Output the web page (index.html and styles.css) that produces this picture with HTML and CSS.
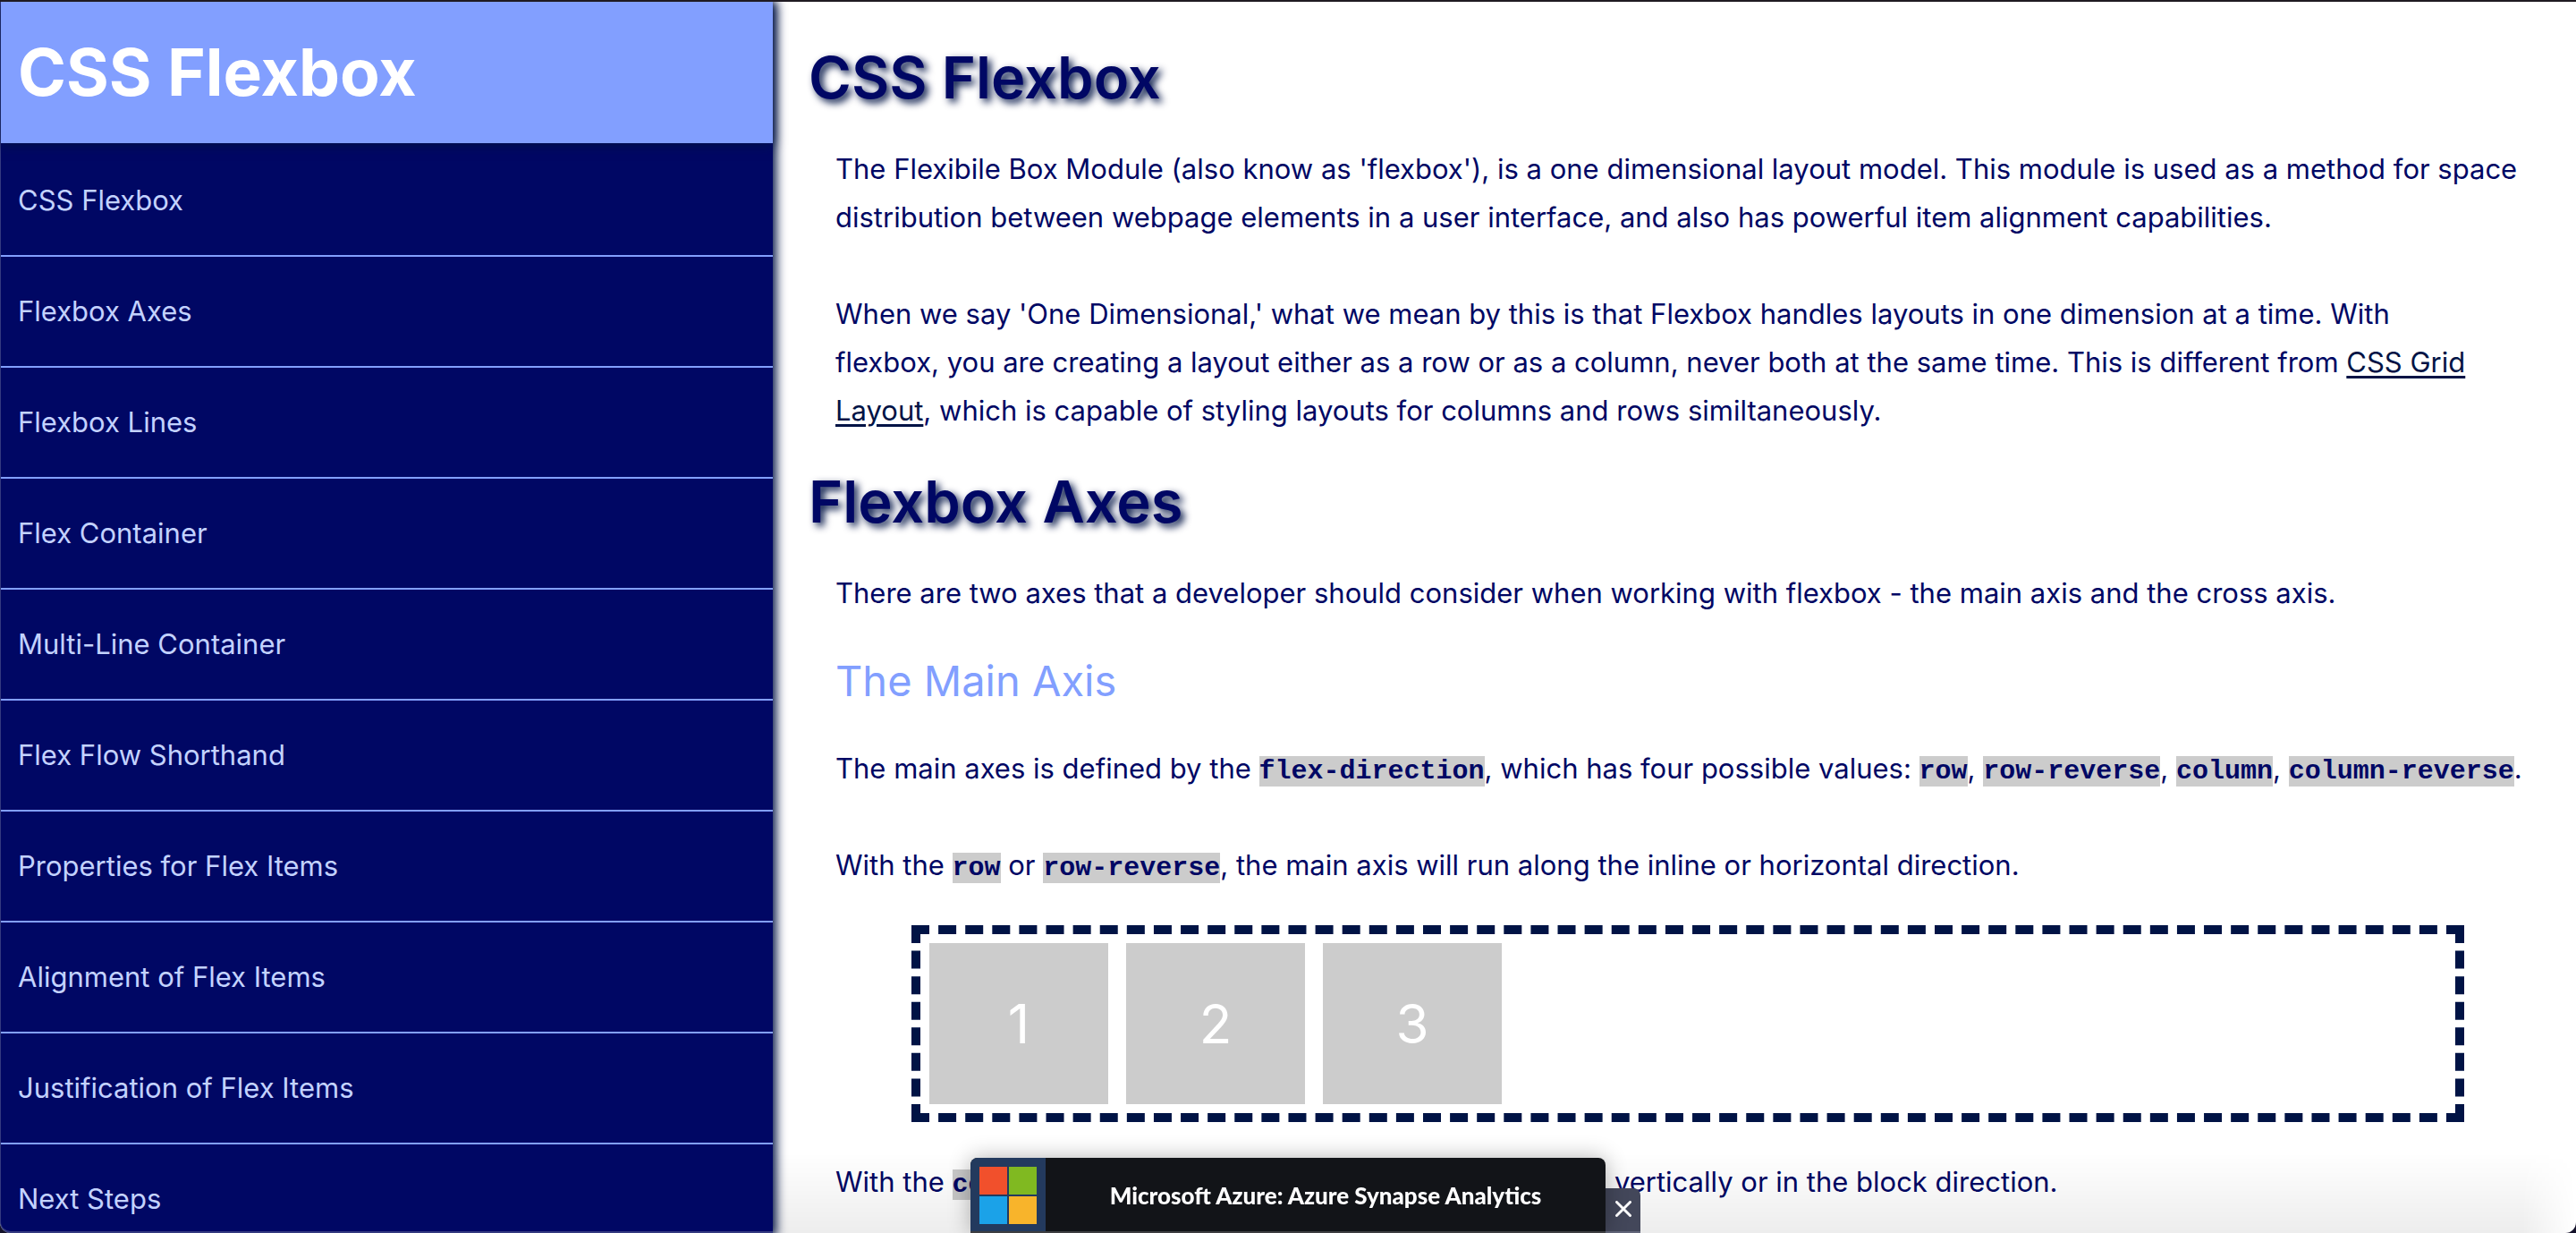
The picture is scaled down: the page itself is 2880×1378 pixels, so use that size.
FILE: index.html
```html
<!DOCTYPE html>
<html lang="en">
<head>
<meta charset="utf-8">
<title>CSS Flexbox</title>
<link rel="stylesheet" href="styles.css">
</head>
<body>
<div class="page">
  <nav class="sidebar">
    <header class="sidebar-title">CSS Flexbox</header>
    <ul class="nav-list">
      <li><a href="#css-flexbox">CSS Flexbox</a></li>
      <li><a href="#flexbox-axes">Flexbox Axes</a></li>
      <li><a href="#flexbox-lines">Flexbox Lines</a></li>
      <li><a href="#flex-container">Flex Container</a></li>
      <li><a href="#multi-line">Multi-Line Container</a></li>
      <li><a href="#flex-flow">Flex Flow Shorthand</a></li>
      <li><a href="#properties">Properties for Flex Items</a></li>
      <li><a href="#alignment">Alignment of Flex Items</a></li>
      <li><a href="#justification">Justification of Flex Items</a></li>
      <li><a href="#next-steps">Next Steps</a></li>
    </ul>
  </nav>
  <main class="content">
    <section id="css-flexbox">
      <h1>CSS Flexbox</h1>
      <p>The Flexibile Box Module (also know as 'flexbox'), is a one dimensional layout model. This module is used as a method for space distribution between webpage elements in a user interface, and also has powerful item alignment capabilities.</p>
      <p>When we say 'One Dimensional,' what we mean by this is that Flexbox handles layouts in one dimension at a time. With<br>flexbox, you are creating a layout either as a row or as a column, never both at the same time. This is different from <a href="#grid">CSS Grid<br>Layout</a>, which is capable of styling layouts for columns and rows similtaneously.</p>
    </section>
    <section id="flexbox-axes">
      <h1>Flexbox Axes</h1>
      <p>There are two axes that a developer should consider when working with flexbox - the main axis and the cross axis.</p>
      <h2>The Main Axis</h2>
      <p>The main axes is defined by the <code>flex-direction</code>, which has four possible values: <code>row</code>, <code>row-reverse</code>, <code>column</code>, <code>column-reverse</code>.</p>
      <p>With the <code>row</code> or <code>row-reverse</code>, the main axis will run along the inline or horizontal direction.</p>
      <div class="demo">
        <div class="demo-item">1</div>
        <div class="demo-item">2</div>
        <div class="demo-item">3</div>
      </div>
      <p>With the <code>column</code> or <code>column-reverse</code>, the main axis will run vertically or in the block direction.</p>
    </section>
  </main>
</div>
<div class="bottom-fade"></div>
<aside class="toast">
  <div class="toast-body">
    <div class="toast-icon">
      <svg viewBox="0 0 64 64" aria-hidden="true">
        <rect x="0" y="0" width="31" height="31" fill="#f1502c"/>
        <rect x="33" y="0" width="31" height="31" fill="#80b921"/>
        <rect x="0" y="33" width="31" height="31" fill="#1ba2e8"/>
        <rect x="33" y="33" width="31" height="31" fill="#f8b42b"/>
      </svg>
    </div>
    <div class="toast-text">Microsoft Azure: Azure Synapse Analytics</div>
  </div>
  <button class="toast-close" type="button" aria-label="Close">
    <svg viewBox="0 0 18 18" aria-hidden="true"><path d="M1.5 1.5 16.5 16.5M16.5 1.5 1.5 16.5" stroke="#fff" stroke-width="3" stroke-linecap="round"/></svg>
  </button>
</aside>
</body>
</html>
```
FILE: styles.css
```css
* { box-sizing: border-box; }

html {
  height: 100%;
  overflow: hidden;
  background: #14122a;
}

body {
  margin: 0;
  height: 100%;
  overflow: hidden;
  border-top: 2px solid #1f1a22;
  border-radius: 0 0 12px 12px;
  background: #fff;
  color: #000764;
  font: 31px/54px Inter, "Open Sans", sans-serif;
}

.page {
  display: grid;
  grid-template-columns: 30% 1fr;
  grid-template-rows: minmax(0, 1fr);
  height: 100%;
}

.sidebar {
  position: relative;
  background: #000764;
  border-bottom: 2px solid #343a80;
  border-left: 1px solid #343a80;
  border-radius: 0 0 0 12px;
  box-shadow: 2px 2px 12px 2px #001345;
}

.sidebar-title {
  height: 158px;
  padding-left: 19px;
  background: #829fff;
  box-shadow: 0 2px 12px #001345;
  color: #fff;
  font-size: 73px;
  font-weight: 700;
  line-height: 158px;
}

.nav-list {
  margin: 0;
  padding: 3px 0 0;
  list-style: none;
}

.nav-list a {
  display: block;
  height: 124px;
  padding-left: 19px;
  border-bottom: 2px solid #829fff;
  color: #c3d2ff;
  line-height: 122px;
  text-decoration: none;
}

.nav-list li:last-child a {
  border-bottom: 0;
}

.content {
  overflow: hidden;
  padding: 40px 40px 0;
}

section + section {
  margin-top: 30px;
}

h1 {
  margin: 0 0 30px;
  font-size: 65px;
  font-weight: 600;
  line-height: 90px;
  text-shadow: 4px 4px 8px #001345;
}

h2 {
  margin: 44px 0 44px 30px;
  color: #829fff;
  font-size: 47px;
  font-weight: 400;
  line-height: 54px;
}

p {
  margin: 0 0 0 30px;
}

p + p {
  margin-top: 54px;
}

p a {
  color: #001345;
  text-underline-offset: 4px;
}

code {
  background: #ccc;
  font: 700 30px/1 "Liberation Mono", monospace;
}

.demo {
  display: flex;
  gap: 20px;
  margin: 40px 85px 40px 115px;
  padding: 10px;
  border: 10px dashed #001345;
}

.demo-item {
  width: 200px;
  height: 180px;
  background: #ccc;
  color: #fff;
  font-size: 60px;
  line-height: 180px;
  text-align: center;
}

.bottom-fade {
  position: fixed;
  right: 0;
  bottom: 0;
  left: 30%;
  height: 90px;
  border-radius: 0 0 12px 0;
  background: linear-gradient(rgba(0, 0, 0, 0), rgba(0, 0, 0, 0.07));
  mask-image: linear-gradient(to left, transparent, #000 60px);
}

.toast {
  position: fixed;
  bottom: 0;
  left: 50%;
  display: flex;
  align-items: flex-end;
  margin-left: -355px;
}

.toast-body {
  z-index: 1;
  display: flex;
  width: 710px;
  height: 84px;
  overflow: hidden;
  border-bottom: 2px solid #3d3e41;
  border-radius: 8px 8px 0 0;
  background: #121418;
  box-shadow: 0 0 24px rgba(0, 0, 0, 0.3);
}

.toast-icon {
  width: 84px;
  padding: 10px;
  background: #233a5e;
}

.toast-icon svg {
  display: block;
  width: 64px;
  height: 64px;
}

.toast-text {
  flex: 1;
  color: #fff;
  font: 900 26px/84px Lato, sans-serif;
  text-align: center;
}

.toast-close {
  width: 39px;
  height: 50px;
  padding: 0;
  border: 0;
  border-bottom: 2px solid #62667a;
  border-radius: 0 8px 0 0;
  background: #43475a;
}

.toast-close svg {
  width: 18px;
  height: 18px;
}
```
